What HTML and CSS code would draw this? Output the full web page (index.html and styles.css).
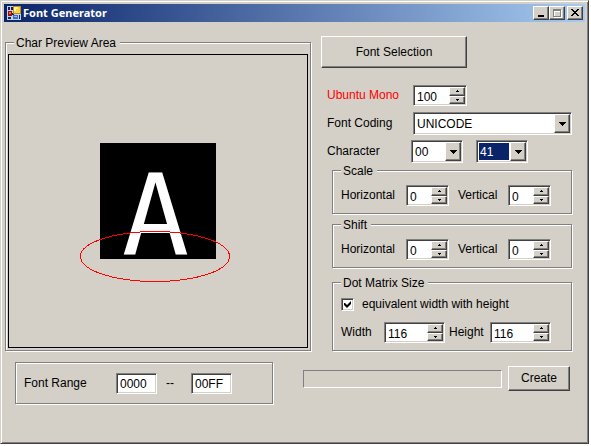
FILE: index.html
```html
<!DOCTYPE html>
<html lang="en">
<head>
<meta charset="utf-8">
<title>Font Generator</title>
<link rel="stylesheet" href="styles.css">
</head>
<body>
<svg class="defs" width="0" height="0" aria-hidden="true">
  <symbol id="up" viewBox="0 0 5 3"><path d="M2 0h1v1h1v1h-3v-1h1z"/></symbol>
  <symbol id="down" viewBox="0 0 5 3"><path d="M1 0h3v1h-1v1h-1v-1h-1z"/></symbol>
  <symbol id="drop" viewBox="0 0 7 4"><path d="M0 0h7v1h-1v1h-1v1h-1v1h-1v-1h-1v-1h-1v-1h-1z"/></symbol>
</svg>
<div class="window">
  <header class="titlebar">
    <svg class="app-icon" width="14" height="14" viewBox="0 0 14 14" shape-rendering="crispEdges" aria-hidden="true">
      <path fill="#c8d0dc" d="M0 0h14v14h-14z"/>
      <path fill="#0a246a" d="M1 1h2v3h-2zM4 1h2v3h-2zM1 11h3v2h-3zM5 7h2v2h-2zM12 9h1v4h-1z"/>
      <path fill="#b89020" d="M6 0h8v8h-8z"/>
      <path fill="#ffd040" d="M7 1h6v6h-6z"/>
      <path fill="#fff0a0" d="M7 1h4v2h-2v2h-2z"/>
      <path fill="#a01010" d="M1 5h4v5h-4z"/>
      <path fill="#f06050" d="M2 6h2v2h-2z"/>
      <path fill="#3870d0" d="M6 9h5v4h-5z"/>
      <path fill="#90c0ff" d="M7 10h3v1h-3z"/>
    </svg>
    <h1>Font Generator</h1>
    <div class="window-buttons">
      <button class="raised" aria-label="Minimize"><svg width="12" height="10" shape-rendering="crispEdges"><path d="M3 7h6v2h-6z"/></svg></button>
      <button class="raised" aria-label="Maximize" disabled><svg width="12" height="10" shape-rendering="crispEdges"><path fill="#fff" fill-rule="evenodd" d="M3 2h8v8h-8zM4 4h6v5h-6z"/><path fill="#808080" fill-rule="evenodd" d="M2 1h8v8h-8zM3 3h6v5h-6z"/></svg></button>
      <button class="raised close" aria-label="Close"><svg width="12" height="10" shape-rendering="crispEdges"><path d="M2 1h2v1h1v1h2v-1h1v-1h2v1h-1v1h-1v1h-1v1h1v1h1v1h1v1h-2v-1h-1v-1h-2v1h-1v1h-2v-1h1v-1h1v-1h1v-1h-1v-1h-1v-1h-1z"/></svg></button>
    </div>
  </header>

  <main class="main">
    <fieldset class="group preview-group">
      <legend>Char Preview Area</legend>
      <div class="preview">
        <div class="glyph">A
          <svg class="marker" width="150" height="51" shape-rendering="crispEdges" aria-hidden="true"><ellipse cx="75" cy="25.5" rx="74.5" ry="25" fill="none" stroke="#f00"/></svg>
        </div>
      </div>
    </fieldset>

    <section class="settings">
      <button class="raised select-font">Font Selection</button>
      <div class="form">
        <label class="font-name" for="size">Ubuntu Mono</label>
        <div class="sunken spinner size"><input id="size" value="100"><span class="steps"><button class="raised" aria-label="Increase"><svg width="5" height="3"><use href="#up"/></svg></button><button class="raised" aria-label="Decrease"><svg width="5" height="3"><use href="#down"/></svg></button></span></div>
      </div>
      <div class="form">
        <label for="coding">Font Coding</label>
        <div class="sunken combo wide"><select id="coding"><option>UNICODE</option></select><span class="raised arrow"><svg width="7" height="4" shape-rendering="crispEdges"><use href="#drop"/></svg></span></div>
      </div>
      <div class="form character">
        <label for="high">Character</label>
        <div class="pair">
          <div class="sunken combo"><select id="high"><option>00</option></select><span class="raised arrow"><svg width="7" height="4" shape-rendering="crispEdges"><use href="#drop"/></svg></span></div>
          <div class="sunken combo active"><select id="low" aria-label="Character low byte"><option>41</option></select><span class="raised arrow"><svg width="7" height="4" shape-rendering="crispEdges"><use href="#drop"/></svg></span></div>
        </div>
      </div>

      <fieldset class="group">
        <legend>Scale</legend>
        <div class="axes">
          <label for="scale-h">Horizontal</label>
          <div class="sunken spinner"><input id="scale-h" value="0"><span class="steps"><button class="raised" aria-label="Increase"><svg width="5" height="3"><use href="#up"/></svg></button><button class="raised" aria-label="Decrease"><svg width="5" height="3"><use href="#down"/></svg></button></span></div>
          <label class="second" for="scale-v">Vertical</label>
          <div class="sunken spinner"><input id="scale-v" value="0"><span class="steps"><button class="raised" aria-label="Increase"><svg width="5" height="3"><use href="#up"/></svg></button><button class="raised" aria-label="Decrease"><svg width="5" height="3"><use href="#down"/></svg></button></span></div>
        </div>
      </fieldset>

      <fieldset class="group shift">
        <legend>Shift</legend>
        <div class="axes">
          <label for="shift-h">Horizontal</label>
          <div class="sunken spinner"><input id="shift-h" value="0"><span class="steps"><button class="raised" aria-label="Increase"><svg width="5" height="3"><use href="#up"/></svg></button><button class="raised" aria-label="Decrease"><svg width="5" height="3"><use href="#down"/></svg></button></span></div>
          <label class="second" for="shift-v">Vertical</label>
          <div class="sunken spinner"><input id="shift-v" value="0"><span class="steps"><button class="raised" aria-label="Increase"><svg width="5" height="3"><use href="#up"/></svg></button><button class="raised" aria-label="Decrease"><svg width="5" height="3"><use href="#down"/></svg></button></span></div>
        </div>
      </fieldset>

      <fieldset class="group matrix">
        <legend>Dot Matrix Size</legend>
        <label class="check"><input type="checkbox" checked>equivalent width with height</label>
        <div class="dimensions">
          <label for="width">Width</label>
          <div class="sunken spinner"><input id="width" value="116"><span class="steps"><button class="raised" aria-label="Increase"><svg width="5" height="3"><use href="#up"/></svg></button><button class="raised" aria-label="Decrease"><svg width="5" height="3"><use href="#down"/></svg></button></span></div>
          <label class="second" for="height">Height</label>
          <div class="sunken spinner"><input id="height" value="116"><span class="steps"><button class="raised" aria-label="Increase"><svg width="5" height="3"><use href="#up"/></svg></button><button class="raised" aria-label="Decrease"><svg width="5" height="3"><use href="#down"/></svg></button></span></div>
        </div>
      </fieldset>
    </section>
  </main>

  <footer class="footer">
    <div class="group range">
      <label for="from">Font Range</label>
      <input class="sunken" id="from" value="0000">
      <span class="dash">--</span>
      <input class="sunken" aria-label="Font range end" value="00FF">
    </div>
    <div class="actions">
      <progress value="0" max="100" aria-label="Progress"></progress>
      <button class="raised create">Create</button>
    </div>
  </footer>
</div>
</body>
</html>
```
FILE: styles.css
```css
:root {
  --face: #d4d0c8;
  --shade: #808080;
  --dark: #404040;
  --navy: #0a246a;
}

* {
  box-sizing: border-box;
}

body {
  margin: 0;
  padding: 0 2px 2px 0;
  background: #fff;
  color: #000;
  font: 12px/15px "Liberation Sans", Arial, sans-serif;
}

button,
input,
select {
  font: inherit;
  color: inherit;
  margin: 0;
  padding: 0;
  border: 0;
  border-radius: 0;
  outline: 0;
}

svg {
  display: block;
}

.defs {
  position: absolute;
}

.window {
  display: flex;
  flex-direction: column;
  min-height: calc(100vh - 2px);
  background: var(--face);
  border: 1px solid;
  border-color: var(--face) var(--dark) var(--dark) var(--face);
  box-shadow: inset 1px 1px #fff, inset -1px -1px var(--shade);
  padding: 1px;
}

.raised {
  display: flex;
  align-items: center;
  justify-content: center;
  background: var(--face);
  border: 1px solid;
  border-color: #fff var(--dark) var(--dark) #fff;
  box-shadow: inset -1px -1px var(--shade);
}

.sunken {
  background: #fff;
  border: 1px solid;
  border-color: var(--shade) #fff #fff var(--shade);
  box-shadow: inset 1px 1px var(--dark), inset -1px -1px var(--face);
  padding: 1px;
}

/* Title bar */
.titlebar {
  display: flex;
  align-items: center;
  height: 18px;
  margin: 2px;
  margin-bottom: 0;
  padding: 0 2px 0 3px;
  background: linear-gradient(to right, var(--navy), #a6caf0);
}

.titlebar h1 {
  flex: 1;
  margin: 0 0 0 2px;
  color: #fff;
  font: bold 11px/18px "Noto Sans", sans-serif;
}

.window-buttons {
  display: flex;
}

.window-buttons button {
  width: 16px;
  height: 14px;
}

.window-buttons .close {
  margin-left: 2px;
}

/* Group boxes */
.group {
  min-width: 0;
  margin: 0;
  padding: 7px 8px;
  border: 1px solid var(--shade);
  box-shadow: 1px 1px #fff, inset 1px 1px #fff;
}

.group legend {
  margin-left: 0;
  padding: 2px 4px 0 2px;
  line-height: 13px;
  background: var(--face);
}

.main {
  display: grid;
  grid-template-columns: 1fr 251px;
  gap: 10px;
  padding: 13px 15px 0 3px;
}

.preview-group {
  display: flex;
  padding: 4px 2px 2px;
}

.preview-group legend {
  margin-left: 6px;
}

.preview {
  flex: 1;
  display: flex;
  align-items: center;
  justify-content: center;
  border: 1px solid #000;
}

.glyph {
  position: relative;
  width: 116px;
  height: 116px;
  padding-right: 5px;
  background: #000;
  color: #fff;
  font: 112px/145px "DejaVu Sans Mono", monospace;
  text-align: center;
}

.marker {
  position: absolute;
  left: -20px;
  top: 88px;
}

/* Settings column */
.settings {
  padding-top: 1px;
}

.select-font {
  width: 146px;
  height: 32px;
  margin-bottom: 17px;
}

.form {
  display: grid;
  grid-template-columns: 86px 1fr;
  align-items: center;
  margin: 0 0 6px 6px;
}

.form.character {
  grid-template-columns: 84px 1fr;
  margin-top: -1px;
  margin-bottom: 0;
}

.font-name {
  color: #f00;
}

.pair {
  display: flex;
  gap: 13px;
}

.spinner {
  display: flex;
  height: 21px;
  padding: 1px;
}

.size {
  width: 54px;
}

.spinner input {
  flex: 1;
  width: 0;
  min-width: 0;
  margin: 1px 0 0 1px;
  padding: 2px 0 0 1px;
  background: #fff;
}

.steps {
  display: grid;
  grid-template-rows: 9px 8px;
  width: 16px;
}

.combo {
  position: relative;
  width: 52px;
  height: 23px;
  padding: 1px;
}

.combo.wide {
  width: auto;
}

.combo select {
  appearance: none;
  display: block;
  width: 100%;
  height: 100%;
  padding: 1px 0 0 1px;
  background: #fff;
  border: 1px solid #fff;
  border-right-width: 17px;
}

.combo.active select {
  background: var(--navy);
  color: #fff;
}

.arrow {
  position: absolute;
  top: 1px;
  right: 1px;
  bottom: 1px;
  width: 16px;
  pointer-events: none;
}

.settings .group {
  margin-left: 11px;
}

.settings .shift {
  margin-top: 3px;
}

.settings .matrix {
  margin-top: 7px;
}

.axes,
.dimensions {
  display: grid;
  grid-template-columns: 65px 43px 59px 43px;
  align-items: center;
}

.dimensions {
  grid-template-columns: 43px 61px 45px 61px;
  margin-top: 10px;
}

.axes .second {
  padding-left: 9px;
}

.dimensions .second {
  padding-left: 4px;
}

.check {
  display: flex;
  align-items: center;
  gap: 8px;
}

.check input {
  appearance: none;
  width: 13px;
  height: 13px;
  background: #fff;
  border: 1px solid;
  border-color: var(--shade) #fff #fff var(--shade);
  box-shadow: inset 1px 1px var(--dark), inset -1px -1px var(--face);
}

.check input:checked::before {
  content: "";
  display: block;
  width: 7px;
  height: 7px;
  margin: 2px;
  background: #000;
  clip-path: polygon(0 2px, 1px 2px, 3px 4px, 7px 0, 7px 3px, 3px 7px, 0 4px);
}

/* Footer */
.footer {
  display: flex;
  gap: 30px;
  padding: 11px 17px 0 13px;
}

.range {
  display: flex;
  align-items: center;
  width: 258px;
  height: 42px;
}

.range label {
  width: 92px;
}

.range input {
  width: 41px;
  height: 21px;
  padding: 1px 0 0 3px;
}

.dash {
  width: 34px;
  padding-left: 9px;
}

.actions {
  flex: 1;
  display: flex;
  align-items: center;
  align-self: flex-start;
  gap: 6px;
  margin-top: 4px;
}

progress {
  appearance: none;
  flex: 1;
  width: 0;
  height: 18px;
  background: transparent;
  border: 1px solid;
  border-color: var(--shade) #fff #fff var(--shade);
}

progress::-webkit-progress-bar {
  background: transparent;
}

.create {
  width: 62px;
  height: 25px;
}
```
